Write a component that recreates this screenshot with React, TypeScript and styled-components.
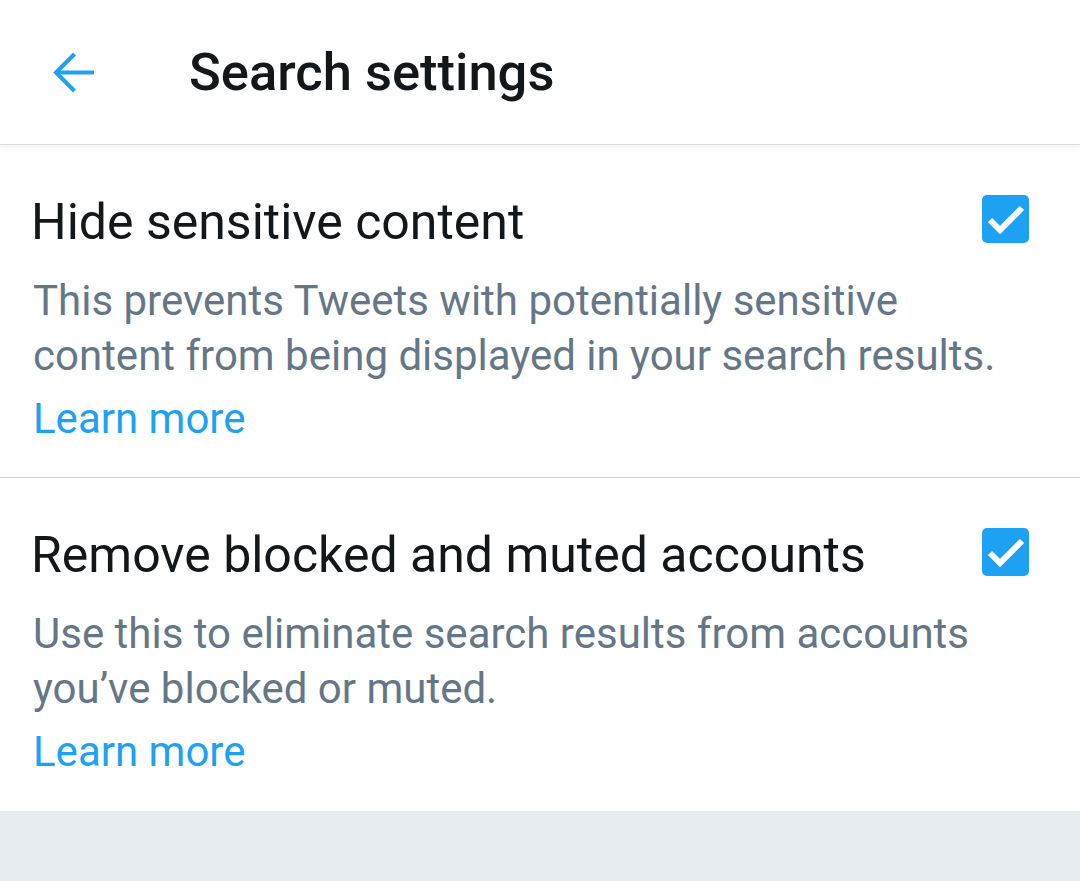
import React from "react";
import styled, { createGlobalStyle } from "styled-components";

const GlobalStyle = createGlobalStyle`
  html, body {
    margin: 0;
    padding: 0;
    background: #e6ecf0;
    font-family: Roboto, "Noto Sans", "Liberation Sans", sans-serif;
    -webkit-font-smoothing: antialiased;
  }
  * { box-sizing: border-box; }
`;

const Page = styled.div`
  width: 1080px;
  min-height: 881px;
  background: #e6ecf0;
`;

const Header = styled.header`
  position: relative;
  z-index: 1;
  height: 145px;
  display: flex;
  align-items: center;
  background: #ffffff;
  border-bottom: 1px solid #dcdcdc;
  box-shadow: 0 2px 8px rgba(0, 0, 0, 0.06);
`;

const BackButton = styled.button`
  display: flex;
  align-items: center;
  justify-content: center;
  margin-left: 53px;
  width: 41px;
  height: 41px;
  padding: 0;
  border: none;
  background: none;
  color: #1da1f2;
  cursor: pointer;
`;

const HeaderTitle = styled.h1`
  margin: 0 0 0 95px;
  font-size: 52.5px;
  line-height: 64px;
  font-weight: 500;
  color: #14171a;
`;

const Content = styled.main`
  background: #ffffff;
`;

const Section = styled.section<{ $last?: boolean }>`
  padding: 45px 34px ${(p) => (p.$last ? "32px" : "31px")} 31px;
  border-bottom: ${(p) => (p.$last ? "none" : "1px solid #ccd6dd")};
`;

const TitleRow = styled.div`
  display: flex;
  align-items: flex-start;
  justify-content: space-between;
`;

const Title = styled.h2`
  margin: 0;
  font-size: 50px;
  line-height: 64px;
  font-weight: 400;
  color: #14171a;
`;

const Checkbox = styled.span`
  flex: none;
  display: flex;
  align-items: center;
  justify-content: center;
  width: 47px;
  height: 48px;
  margin-top: 5px;
  margin-right: 17px;
  border-radius: 5px;
  background: #1da1f2;
`;

const Description = styled.p`
  margin: 19px 0 0 2px;
  font-size: 42px;
  line-height: 55px;
  color: #657786;
  padding-right: 10px;
`;

const LearnMore = styled.a`
  display: block;
  margin: 8px 0 0 2px;
  font-size: 42px;
  line-height: 55px;
  color: #1da1f2;
  text-decoration: none;
`;

const BackArrow = () => (
  <svg width="41" height="41" viewBox="0 0 41 41" fill="none">
    <path d="M41 20.5H4" stroke="currentColor" strokeWidth="4" />
    <path d="M21.5 2L3 20.5L21.5 39" stroke="currentColor" strokeWidth="4" />
  </svg>
);

const Check = () => (
  <svg width="47" height="48" viewBox="0 0 47 48" fill="none">
    <path
      d="M8 25L18 35L40 13"
      stroke="#ffffff"
      strokeWidth="6"
      strokeLinecap="butt"
      strokeLinejoin="miter"
    />
  </svg>
);

const settings = [
  {
    title: "Hide sensitive content",
    description:
      "This prevents Tweets with potentially sensitive content from being displayed in your search results.",
  },
  {
    title: "Remove blocked and muted accounts",
    description:
      "Use this to eliminate search results from accounts you\u2019ve blocked or muted.",
  },
];

export default function App() {
  return (
    <Page>
      <GlobalStyle />
      <Header>
        <BackButton aria-label="Back">
          <BackArrow />
        </BackButton>
        <HeaderTitle>Search settings</HeaderTitle>
      </Header>
      <Content>
        {settings.map((s, i) => (
          <Section key={s.title} $last={i === settings.length - 1}>
            <TitleRow>
              <Title>{s.title}</Title>
              <Checkbox role="checkbox" aria-checked="true">
                <Check />
              </Checkbox>
            </TitleRow>
            <Description>{s.description}</Description>
            <LearnMore href="#">Learn more</LearnMore>
          </Section>
        ))}
      </Content>
    </Page>
  );
}
